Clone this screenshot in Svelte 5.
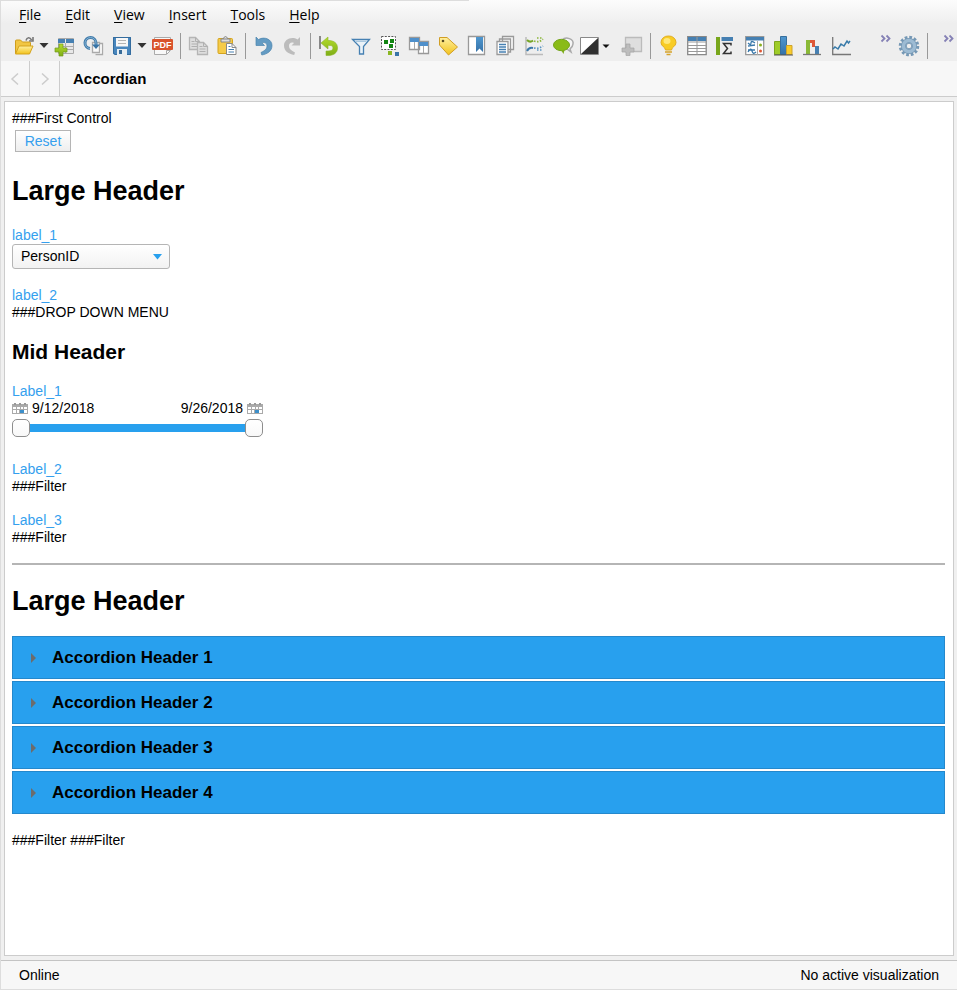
<script>
  const menus = ['File', 'Edit', 'View', 'Insert', 'Tools', 'Help'];
  const headers = ['Accordion Header 1', 'Accordion Header 2', 'Accordion Header 3', 'Accordion Header 4'];
  let open = $state([false, false, false, false]);
  let from = $state(12);
  let to = $state(26);

  const page = (x, y) =>
    `<path d="M${x} ${y}h6l4 4v8h-10z" fill="#dedede" stroke="#b5b5b5" stroke-width="1.300"/><path d="M${x + 6} ${y}v4h4M${x + 2} ${y + 4}h3M${x + 2} ${y + 6.5}h6M${x + 2} ${y + 9}h6" fill="none" stroke="#b0b0b0"/>`;

  const defs = `<linearGradient id="gold" x2="0" y2="1"><stop stop-color="#fff0a0"/><stop offset="1" stop-color="#f2c21b"/></linearGradient>
    <linearGradient id="lime" x2="0" y2="1"><stop stop-color="#b4dc2c"/><stop offset="1" stop-color="#7fae16"/></linearGradient>
    <linearGradient id="sea" x2="0" y2="1"><stop stop-color="#4f97cf"/><stop offset="1" stop-color="#3572a8"/></linearGradient>`;

  const tools = [
    { name: 'Open', art: `<path d="M12 4.500c1-3.500 4-3.500 5.500-.5m1.500-3v4h-4" fill="none" stroke="#777" stroke-width="1.600"/><path d="M1.500 17.500V5q0-1 1-1h4l2 2h7q1 0 1 1v4" fill="#f1c644" stroke="#cf9e1c"/><path d="M1.500 18l3.500-8h14l-3.500 8z" fill="url(#gold)" stroke="#d4a31d"/>` },
    { caret: true, name: 'Open options' },
    { name: 'Add data table', art: `<path d="M4.500 2.500h15v15h-15z" fill="#e8e8e8" stroke="#aaa"/><path d="M4 3h7v4H4zM12 3h8v4h-8z" fill="#4680b2"/><path d="M11.500 7v10M5 10.500h14M5 13.500h14" stroke="#aaa"/><path d="M5 8h4v4h4v4H9v4H5v-4H1v-4h4z" fill="url(#lime)" stroke="#70991e" stroke-width=".7"/>` },
    { name: 'Replace data table', art: `<path d="M13.500 7.500h6v11h-7" fill="#fff" stroke="#aaa" stroke-width="1.300"/><path d="M9.500 6.500h7v10h-7z" fill="#fafafa" stroke="#aaa" stroke-width="1.300"/><path d="M7 12.500A5.500 5.500 0 1 1 13 7v2" fill="none" stroke="#427cab" stroke-width="3"/><path d="M7 12.500A5.500 5.500 0 1 1 13 7v2" fill="none" stroke="#82b1d3"/><path d="M9 8.500h8L13 13z" fill="#3975a7"/>` },
    { name: 'Save', art: `<path d="M1 1h18v18H2.500L1 17.500z" fill="#4886bd"/><path d="M1.500 1.500h17v17H3l-1.500-1.500z" fill="none" stroke="#346c9e"/><path d="M4 2h12v8.500H4z" fill="#f7f7f7"/><path d="M6 4.500h8M6 7.500h8" stroke="#b4b4b4"/><path d="M5 13h10v6H5z" fill="#e8eef2"/><path d="M7 14h3v4H7z" fill="#386b98"/>` },
    { caret: true, name: 'Save options' },
    { name: 'Export to PDF', art: `<path d="M2.500 1.500h16v13l-4 4h-12z" fill="#f8f8f8" stroke="#aaa"/><path d="M18 14.500h-3.500V18" fill="none" stroke="#aaa"/><rect x="0" y="3" width="21" height="11" rx="1" fill="#d9532c"/><text x="10.500" y="12" text-anchor="middle" font-family="Liberation Sans, sans-serif" font-size="9" font-weight="bold" fill="#fff">PDF</text>` },
    { sep: true },
    { name: 'Copy', art: page(1.5, 1.5) + page(9.5, 6.5) },
    { name: 'Paste', art: `<rect x="1" y="2.500" width="14.500" height="15" rx="1" fill="#f5cb49" stroke="#d4a31d"/><path d="M4 3h9v3H4zM6 3q2.500-5 5 0" fill="#ddd" stroke="#888"/><path d="M9.500 7.500h5.500l4 4v7H9.500z" fill="#fff" stroke="#888"/><path d="M15 7.500v4h4" fill="none" stroke="#888"/><path d="M11.500 10.500h2M11.500 13.500h5.500M11.500 16h5.500" stroke="#4680b2"/>` },
    { sep: true },
    { name: 'Undo', art: `<path d="M3 1v8.500h8.500L9 7c3-1.200 5 .4 5 3 0 2.800-2 4.500-6 6.500l.8 2.500C14.500 18 19 15 19 9.500 19 3.500 11.500 0 5.500 3.500z" fill="#639bc3" stroke="#4b84ad" stroke-width=".7"/>` },
    { name: 'Redo', art: `<path d="M18 1v8.500H9.500L12 7C9 5.800 7 7.400 7 10c0 2.800 2 4.500 6 6.500l-.8 2.500C6.500 18 2 15 2 9.500 2 3.500 9.500 0 15.500 3.500z" fill="#bcbcbc"/>` },
    { sep: true },
    { name: 'Reset', gap: true, art: `<path d="M2 0v13" stroke="#888" stroke-width="2"/><path d="M3 7l7-6v3.500c6 0 9.500 2.500 9.500 7.500s-4 7.500-9.500 7.500H8v-4.500h2c3 0 5-1 5-3s-1.500-2.700-5-2.700V13z" fill="url(#lime)" stroke="#8bb52a" stroke-width=".6"/>` },
    { name: 'Filters', art: `<path d="M1.500 3.500h17l-6 7v7.500h-4v-7.500z" fill="#eaf2f8" stroke="#4680b2" stroke-width="1.300"/><path d="M4.500 5.500h11" stroke="#a9c8df"/>` },
    { name: 'Marked', art: `<rect x="1.500" y=".500" width="14" height="13" fill="#fff" stroke="#555" stroke-dasharray="2 1.300"/><path d="M4 4h4v4H4zM10 3h4v4h-4zM9 8h4v4H9z" fill="#128512"/><path d="M8 15h4v4H8z" fill="#8ab622"/><path d="M15 16h4v4h-4z" fill="#3974a7"/>` },
    { name: 'Tables', art: `<path d="M.5 1.500h10v12H.500zM9.500 5.500h10v12h-10z" fill="#fff" stroke="#999" stroke-width="1.300"/><path d="M5.500 2v11M14.500 6v11" stroke="#aaa"/><path d="M1 2h9v4H1zM10 6h9v4h-9z" fill="#4f90cb"/>` },
    { name: 'Tags', art: `<path d="M1.500 1.500h7.500l10.500 9.500-9 8L1.500 9z" fill="url(#gold)" stroke="#d19e25"/><circle cx="5" cy="5" r="1.300" fill="#594a20"/>` },
    { name: 'Bookmarks', art: `<path d="M1.500 .500h16v18h-16z" fill="#fff" stroke="#999" stroke-width="1.300"/><path d="M9 1h7v15l-3.500-3.500L9 16z" fill="url(#sea)"/>` },
    { name: 'Pages', art: `<path d="M6.500 .500h11v13h-11zM3.500 3h11v13h-11z" fill="#fafafa" stroke="#999" stroke-width="1.300"/><path d="M1 5.500h11v13H1z" fill="#fff" stroke="#999" stroke-width="1.300"/><path d="M3 8.500h7M3 11h7M3 13.500h7M3 16h7" stroke="#4680b2" stroke-width="1.300"/>` },
    { name: 'Lines and curves', art: `<path d="M1 1v17.500h17" fill="none" stroke="#bbb" stroke-width="1.500"/><path d="M2 4q3 3 6 .5" fill="none" stroke="#76a526" stroke-width="2"/><path d="M9 5q5 2 9-2M12 2h6" fill="none" stroke="#8ab63a" stroke-width="1.700" stroke-dasharray="1.500 1.500"/><path d="M2 15q2-4 6-3" fill="none" stroke="#3b78aa" stroke-width="2"/><path d="M9 12q5 1 9-2M12 14h6" fill="none" stroke="#5b95c3" stroke-width="1.700" stroke-dasharray="1.500 1.500"/>` },
    { name: 'Comments', art: `<path d="M8 4c4-4 12-1 11 4 0 2-2 4-3 5l1 3-4-3" fill="#f5f5f5" stroke="#aaa" stroke-width="1.500"/><ellipse cx="7.500" cy="9" rx="8" ry="5.700" fill="#8abb17" stroke="#74a41c"/><path d="M7 14l2.500 4 1-4z" fill="#7dac1a"/>` },
    { name: 'Colour scheme', wide: true, art: `<path d="M-2.500 1.500h18v17h-18z" fill="#fff" stroke="#888"/><path d="M15 2v16H-2z" fill="#303030"/><path d="M19.500 8.500h7l-3.500 3.500z" fill="#111"/>` },
    { name: 'Add visualization', art: `<path d="M3.500 1.500h16v14h-16z" fill="#dedede" stroke="#bbb" stroke-width="1.300"/><path d="M4 8h4v4h4v4H8v3.500H4V16H0v-4h4z" fill="#bdbdbd" stroke="#a5a5a5" stroke-width=".7"/>` },
    { sep: true },
    { name: 'Recommendations', art: `<path d="M7.500 14c0-3-4.500-3.500-4.500-7.500A7 6.500 0 0 1 10.500 0a7 6.500 0 0 1 7.500 6.500c0 4-4.500 4.500-4.500 7.500z" fill="#f8cc25" stroke="#e1ad22"/><ellipse cx="9" cy="5" rx="3.500" ry="3" fill="#ffe87b"/><path d="M7 16h7M8.500 18.500h4" stroke="#d6a32a" stroke-width="1.500"/>` },
    { name: 'Table', art: `<path d="M.700 .700h18.500v18H.700z" fill="#fff" stroke="#888" stroke-width="1.300"/><path d="M1 1h18v4H1z" fill="#4680b2"/><path d="M1 6h18M1 9.500h18M1 12.500h18M1 15.500h18M10 1v18" stroke="#999"/>` },
    { name: 'Cross table', art: `<path d="M0 1h4v18H0z" fill="#78a61b"/><path d="M5.500 1H17v4H5.500z" fill="#4680b2"/><path d="M15 9.500V7.500H7.500l4 5-4 5H15v-2" fill="none" stroke="#333" stroke-width="1.500"/>` },
    { name: 'Graphical table', art: `<path d="M.700 .700h18v18h-18z" fill="#fff" stroke="#999" stroke-width="1.300"/><path d="M1 1h18v3.500H1z" fill="#4680b2"/><path d="M12.500 5v14" stroke="#aaa"/><path d="M3 7q3 3 3 0t4 0M3 10l7-1M3 16q3-5 4-1t4 1M3 14h7" fill="none" stroke="#3978aa" stroke-width="1.300"/><circle cx="15.500" cy="9" r="1.500" fill="#88af1f"/><circle cx="15.500" cy="15" r="1.500" fill="#df5532"/>` },
    { name: 'Bar chart', art: `<path d="M.5 5.500h6v13h-6z" fill="#9fcc28" stroke="#7da51c"/><path d="M6.500 .500h6v18h-6z" fill="url(#sea)" stroke="#376f9d"/><path d="M12.500 9.500h5.500v9h-5.500z" fill="#f9cc2a" stroke="#cda32b"/><path d="M0 19h19" stroke="#555"/>` },
    { name: 'Waterfall chart', art: `<path d="M3 4h4v14H3z" fill="#8ab936"/><path d="M7 4h5v7H9V7H7z" fill="#dd5839"/><path d="M12 10h4v8h-4z" fill="#4680b2"/><path d="M0 18.500h18" stroke="#777" stroke-width="1.300"/>` },
    { name: 'Line chart', art: `<path d="M.700 1v17.500H19" fill="none" stroke="#777" stroke-width="1.300"/><path d="M1 13l2-2 3 2 3-5 3 2 3-5 1.500 2L18 5" fill="none" stroke="#377aa9" stroke-width="1.500"/>` }
  ];
</script>

{#snippet chevrons(label)}
  <button class="more" aria-label={label}>
    <svg width="10" height="7" viewBox="0 0 10 7"><path d="M.500 .500l3 3-3 3M5.500 .500l3 3-3 3" fill="none" stroke="#8581b5" stroke-width="1.800" /></svg>
  </button>
{/snippet}

{#snippet calendar(label)}
  <button class="cal" aria-label={label}>
    <svg width="16" height="12" viewBox="0 0 16 12">
      <path d="M0 1h16v10H0z" fill="#aaa" /><path d="M2 0h2v2H2zM7 0h2v2H7zM12 0h2v2h-2z" fill="#999" />
      <path d="M1 4h3v2H1zM5 4h3v2H5zM9 4h2v2H9zM12 4h3v2h-3zM1 7h3v3H1zM5 7h2v3H5zM12 7h3v3h-3z" fill="#fff" />
      <path d="M8 7h4v3H8z" fill="#3c8fca" />
    </svg>
  </button>
{/snippet}

<div class="app">
  <header>
    <nav aria-label="Main menu">
      {#each menus as m}<button><u>{m[0]}</u>{m.slice(1)}</button>{/each}
    </nav>
    <div class="toolbar" role="toolbar" aria-label="Tools">
      <svg class="defs" width="0" height="0" aria-hidden="true"><defs>{@html defs}</defs></svg>
      {#each tools as t}
        {#if t.sep}
          <span class="sep"></span>
        {:else if t.caret}
          <button class="caret" aria-label={t.name}><svg width="10" height="6" viewBox="0 0 10 6"><path d="M.500 0h9L5 5z" fill="#333" /></svg></button>
        {:else}
          <button class="tool" class:gap={t.gap} aria-label={t.name}>
            <svg width={t.wide ? 30 : 20} height="20" viewBox={t.wide ? '0 0 30 20' : '0 0 20 20'}>{@html t.art}</svg>
          </button>
        {/if}
      {/each}
      <div class="tail">
        {@render chevrons('More visualizations')}
        <button class="tool" aria-label="Settings">
          <svg width="20" height="20" viewBox="0 0 20 20">
            <circle cx="10" cy="10" r="8.500" fill="none" stroke="#7598b5" stroke-width="3.500" stroke-dasharray="2.650 1.800" />
            <circle cx="10" cy="10" r="5.500" fill="none" stroke="#7598b5" stroke-width="5" />
            <circle cx="10" cy="10" r="5.500" fill="none" stroke="#9dbbd3" stroke-width="3.500" />
            <circle cx="10" cy="10" r="2.800" fill="#eee" stroke="#7598b5" />
          </svg>
        </button>
        <span class="sep"></span>
        {@render chevrons('More tools')}
      </div>
    </div>
  </header>

  <div class="tabs">
    <button aria-label="Previous page"><svg width="10" height="14" viewBox="0 0 10 14"><path d="M8 1.500L2 7l6 5.500" fill="none" stroke="#ccc" stroke-width="1.500" /></svg></button>
    <button aria-label="Next page"><svg width="10" height="14" viewBox="0 0 10 14"><path d="M2 1.500L8 7l-6 5.500" fill="none" stroke="#ccc" stroke-width="1.500" /></svg></button>
    <strong>Accordian</strong>
  </div>

  <main>
    <div>###First Control</div>
    <button class="reset">Reset</button>
    <h1>Large Header</h1>
    <div class="field">
      <label for="person">label_1</label>
      <div class="pick">
        <select id="person"><option>PersonID</option></select>
        <svg width="9" height="6" viewBox="0 0 9 6" aria-hidden="true"><path d="M0 0h9L4.500 5.500z" fill="#28a0ee" /></svg>
      </div>
    </div>
    <div class="field menu"><span class="lbl">label_2</span><div>###DROP DOWN MENU</div></div>
    <h2>Mid Header</h2>
    <div class="field">
      <label for="from">Label_1</label>
      <div class="range">
        <div class="dates">
          {@render calendar('Pick start date')}<span>9/{from}/2018</span>
          <span class="end">9/{to}/2018</span>{@render calendar('Pick end date')}
        </div>
        <div class="slider">
          <span class="track"></span>
          <input id="from" type="range" min="12" max="26" bind:value={from} />
          <input type="range" min="12" max="26" bind:value={to} aria-label="End date" />
        </div>
      </div>
    </div>
    <div class="field filter"><span class="lbl">Label_2</span><div>###Filter</div></div>
    <div class="field"><span class="lbl">Label_3</span><div>###Filter</div></div>
    <hr />
    <h1>Large Header</h1>
    <div class="accordion">
      {#each headers as h, i}
        <h3>
          <button aria-expanded={open[i]} onclick={() => (open[i] = !open[i])}>
            <svg width="5" height="10" viewBox="0 0 5 10" aria-hidden="true"><path d="M0 0l5 5-5 5z" fill="#6c6c6c" /></svg>{h}
          </button>
        </h3>
      {/each}
    </div>
    <div>###Filter ###Filter</div>
  </main>

  <footer><span>Online</span><span>No active visualization</span></footer>
</div>

<style>
  :global(body) { margin: 0; }
  .app {
    box-sizing: border-box;
    min-height: 100vh;
    display: flex;
    flex-direction: column;
    background: #f0f0f0;
    border-left: 1px solid #ddd;
    border-bottom: 1px solid #ddd;
    font: 14px/17px "Liberation Sans", Arial, sans-serif;
    color: #000;
  }
  button { font: inherit; color: inherit; background: none; border: 0; padding: 0; margin: 0; }
  svg { display: block; overflow: visible; flex: none; }
  header {
    background:
      linear-gradient(#ddd, #ddd) 0 0 / 49% 1px no-repeat,
      linear-gradient(#fcfcfc, #eee 24px, #eee);
  }
  nav {
    display: flex;
    gap: 24px;
    height: 30px;
    padding-left: 18px;
    align-items: center;
    font: 14px/20px "Open Sans", "Segoe UI", sans-serif;
  }
  nav u { text-underline-offset: 2px; }
  .toolbar { display: flex; gap: 1px; height: 31px; align-items: center; padding-left: 9px; }
  .defs { position: absolute; }
  .tool { padding: 4px; }
  .tool.gap { margin-right: 4px; }
  .caret { width: 10px; }
  .sep { width: 1px; height: 26px; margin: 0 2px 0 3px; background: #999; }
  .tail { display: flex; align-items: center; margin-left: auto; gap: 4px; padding-right: 3px; }
  .tail .sep { margin: 0 12px 0 0; }
  .more { padding-bottom: 14px; }
  .tabs { display: flex; height: 35px; background: #f7f7f7; border-bottom: 1px solid #ccc; }
  .tabs button { box-sizing: border-box; width: 29px; display: grid; place-items: center; border-right: 1px solid #ccc; }
  .tabs button + button { width: 30px; }
  .tabs strong { padding-left: 13px; font-size: 15px; line-height: 35px; }
  main {
    flex: 1;
    margin: 4px 3px;
    padding: 8px 8px 24px 7px;
    background: #fff;
    border: 1px solid #ccc;
  }
  .reset {
    display: block;
    width: 56px;
    height: 22px;
    margin: 3px 0 0 3px;
    border: 1px solid #b5b5b5;
    background: linear-gradient(#fff, #eee);
    color: #359fee;
    line-height: 20px;
  }
  h1 { font-size: 27px; line-height: 32px; margin: 23px 0 20px; }
  h2 { font-size: 21px; line-height: 24px; margin: 19px 0; }
  label, .lbl { display: block; color: #359fee; }
  .field { margin-bottom: 17px; }
  .filter { margin-top: 25px; }
  .pick { display: grid; width: 158px; align-items: center; }
  .pick select, .pick svg { grid-area: 1 / 1; }
  .pick svg { justify-self: end; margin-right: 8px; pointer-events: none; }
  select {
    appearance: none;
    height: 25px;
    padding: 0 8px;
    border: 1px solid #b5b5b5;
    border-radius: 3px;
    background: linear-gradient(#fff, #f2f2f2);
    font: inherit;
    color: #000;
  }
  .menu { margin-top: 18px; }
  .range { width: 251px; }
  .dates { display: flex; align-items: center; gap: 4px; }
  .dates .end { margin-left: auto; }
  .slider { display: grid; align-items: center; margin-top: 2px; height: 17px; }
  .track { grid-area: 1 / 1; height: 8px; margin: 0 9px; background: #28a0ee; }
  input[type='range'] {
    grid-area: 1 / 1;
    appearance: none;
    width: 100%;
    height: 18px;
    margin: 0;
    background: none;
    pointer-events: none;
  }
  input[type='range']::-webkit-slider-thumb {
    appearance: none;
    box-sizing: border-box;
    width: 18px;
    height: 18px;
    border: 1px solid #8e8e8e;
    border-radius: 5px;
    background: linear-gradient(#fff, #f8f8f8);
    pointer-events: auto;
  }
  hr { height: 2px; margin: 16px 0 0; border: 0; background: #b5b5b5; }
  hr + h1 { margin: 20px 0 19px; }
  .accordion { display: grid; gap: 2px; margin-bottom: 18px; }
  h3 { margin: 0; font-size: 17px; line-height: 41px; }
  h3 button {
    display: flex;
    align-items: center;
    gap: 16px;
    width: 100%;
    padding-left: 18px;
    border: 1px solid #2488cc;
    background: #28a0ee;
    color: #000;
  }
  footer {
    display: flex;
    justify-content: space-between;
    padding: 6px 18px 5px;
    border-top: 1px solid #c4c4c4;
    background: #f7f7f7;
  }
</style>
